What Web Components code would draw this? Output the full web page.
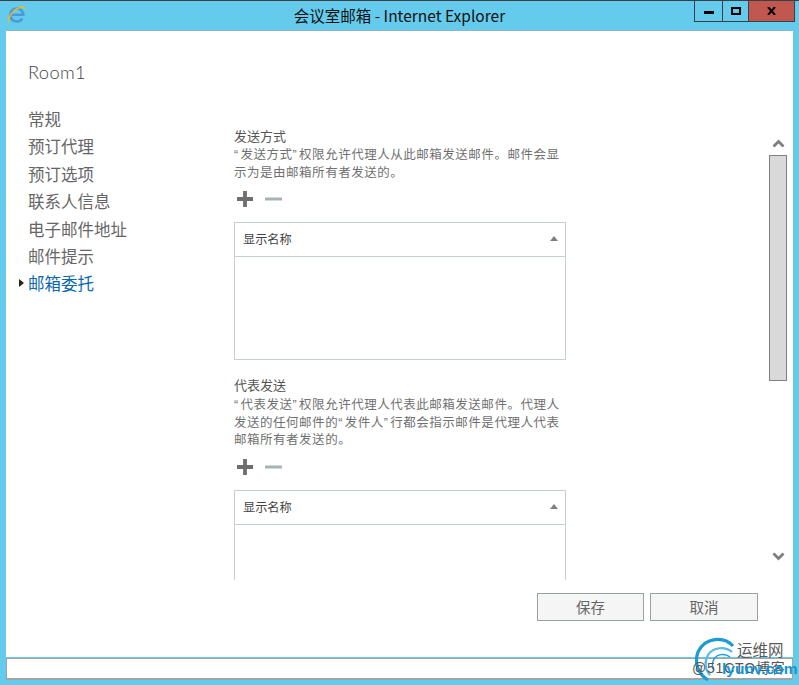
<!DOCTYPE html>
<html lang="zh"><head><meta charset="utf-8"><title>会议室邮箱</title>
<style>html,body{margin:0;padding:0;background:#65cbec}body{width:799px;height:685px;overflow:hidden;font-family:"Noto Sans CJK SC","Liberation Sans",sans-serif}</style></head>
<body>
<ie-window>
  <room-nav slot="nav"></room-nav>
  <delegate-section title-text="发送方式" lines="“发送方式”权限允许代理人从此邮箱发送邮件。邮件会显|示为是由邮箱所有者发送的。"></delegate-section>
  <delegate-section style="--dg:3px;--tg:7.5px" title-text="代表发送" lines="“代表发送”权限允许代理人代表此邮箱发送邮件。代理人|发送的任何邮件的“发件人”行都会指示邮件是代理人代表|邮箱所有者发送的。"></delegate-section>
</ie-window>
<script>
const F='"Noto Sans CJK SC","Liberation Sans",sans-serif';
customElements.define('ie-window',class extends HTMLElement{constructor(){super();this.attachShadow({mode:'open'}).innerHTML=`<style>
:host{display:flex;flex-direction:column;width:799px;height:685px;box-sizing:border-box;background:#65cbec;border-top:1px solid #3a3f44;position:relative;font-family:${F}}
.title{height:29px;flex:none;display:flex;align-items:flex-start;position:relative}
.logo{margin:5px 0 0 8px;flex:none}
.t{position:absolute;left:0;right:0;top:5px;text-align:center;font:15.5px/18px ${F};color:#111}
.ctrls{position:absolute;right:4px;top:0;display:flex;height:21px;border:1px solid #3c4046;border-top:0;box-sizing:border-box}
.ctrls div{display:flex;align-items:center;justify-content:center;box-sizing:border-box;height:20px}
.min{width:28px;border-right:1px solid #3c4046}.max{width:26px;border-right:1px solid #3c4046}.cl{width:45px;background:#c0584f}
.main{margin:0 6px;flex:none;height:627px;background:#fff;border-top:1px solid #8fb6c8;box-sizing:border-box;display:flex;flex-direction:column}
.h{font:300 18.300px/24px Lato,"Liberation Sans",sans-serif;color:#454545;padding:29px 0 0 22px;height:24px;flex:none;letter-spacing:.35px}
.body{display:flex;height:475px;margin-top:22px;flex:none;position:relative}
.navc{width:228px;flex:none}
.scroll{width:332px;height:452px;overflow:hidden;flex:none;margin-top:-1px;padding-top:23px}
.sb{position:absolute;left:763px;top:0;width:18px;height:475px}
.foot{display:flex;justify-content:flex-end;gap:6px;padding:12px 35px 0 0;flex:none}
.status{margin:0 6px;height:22px;flex:none;background:#fff;border:1px solid #a3a3a3;border-bottom-width:2px;box-sizing:border-box;margin-top:1px}
.wm{position:absolute;left:695px;top:636px;width:100px;height:44px;pointer-events:none}
.wm .a{position:absolute;left:42px;top:3px;font:15.5px/18px ${F};color:#5a5a5a}
.wm .b{position:absolute;left:-3px;top:22px;font:14px/18px "Liberation Sans",${F};color:#555;white-space:nowrap;letter-spacing:.8px}
.wm .c{position:absolute;left:27px;top:23px;font:bold 15.5px/18px "Liberation Sans",sans-serif;color:#0f96d8;white-space:nowrap}
</style>
<div class="title">
<svg class="logo" width="18" height="18" viewBox="0 0 18 18">
<path d="M14.300 12.500A6.500 6.500 0 1 1 15.300 8.800H3.500" fill="none" stroke="#4a9bd8" stroke-width="2.600"/>
<path d="M1 16.500C-1 13 4 5 10 2.300c3.800-1.700 7-1.500 7 .8" fill="none" stroke="#f2b52a" stroke-width="1.600"/></svg>
<div class="t">会议室邮箱 - Internet Explorer</div>
<div class="ctrls">
<div class="min"><svg width="10" height="10" viewBox="0 0 10 10"><rect y="5" width="10" height="3" fill="#000"/></svg></div>
<div class="max"><svg width="10" height="8" viewBox="0 0 10 8"><rect x="1" y="1" width="8" height="6" fill="none" stroke="#000" stroke-width="2"/></svg></div>
<div class="cl"><svg width="9" height="8" viewBox="0 0 9 8"><path d="M1 0l7 8M8 0L1 8" fill="none" stroke="#000" stroke-width="2"/></svg></div>
</div></div>
<div class="main">
<div class="h">Room1</div>
<div class="body"><div class="navc"><slot name="nav"></slot></div><div class="scroll"><slot></slot></div>
<div class="sb"><x-scrollbar></x-scrollbar></div></div>
<div class="foot"><flat-button>保存</flat-button><flat-button wide>取消</flat-button></div>
</div>
<div class="status"></div>
<div class="wm">
<svg width="50" height="46" viewBox="0 0 50 46" style="position:absolute;left:0;top:0"><path d="M38 9C29-1 10 0 3 15c-4 11 0 22 10 28" fill="none" stroke="#1c9ad6" stroke-width="3.200"/><path d="M37 15c-7-6-19-5-24 3-4 7-3 15 2 20" fill="none" stroke="#55bbe6" stroke-width="2.200"/><path d="M35 20c-5-4-13-3-16 2-2 4-2 8 0 11" fill="none" stroke="#1c9ad6" stroke-width="1.500"/></svg>
<div class="a">运维网</div><div class="b">@51CTO博客</div><div class="c">lyunv.com</div>
</div>`}});
customElements.define('room-nav',class extends HTMLElement{constructor(){super();const items=['常规','预订代理','预订选项','联系人信息','电子邮件地址','邮件提示','邮箱委托'];
this.attachShadow({mode:'open'}).innerHTML=`<style>
:host{display:flex;flex-direction:column;padding-left:22px;font:16.500px/27.400px ${F};color:#666}
div{height:27.400px;position:relative;white-space:nowrap}
.on{color:#0a67b0}
.on:before{content:"";position:absolute;left:-9.500px;top:9px;border-left:5px solid #222;border-top:4px solid transparent;border-bottom:4px solid transparent}
</style>`+items.map((t,i)=>`<div class="${i==6?'on':''}">${t}</div>`).join('')}});
customElements.define('delegate-section',class extends HTMLElement{connectedCallback(){if(this.shadowRoot)return;
const ls=this.getAttribute('lines').split('|').map(l=>`<div>${l.replace(/[“”]/g,m=>`<span class="q">${m}</span>`)}</div>`).join('');
this.attachShadow({mode:'open'}).innerHTML=`<style>
:host{display:block;width:332px;margin-bottom:17px;font-family:${F}}
.t{font:13px/15px ${F};color:#555}
.d{font:12.500px/17.500px ${F};color:#707070;white-space:nowrap;margin-top:var(--dg,2px);letter-spacing:.52px}
.d div{height:17.500px}
.q{display:inline-block;width:6.500px;font-family:"Liberation Sans",sans-serif;line-height:1;letter-spacing:0}
.tools{display:flex;gap:12px;margin:var(--tg,7px) 0 0 3px;height:24px;align-items:center}
.list{border:1px solid #c4ced3;box-sizing:border-box;width:332px;height:138px;margin-top:11px}
.hd{height:34px;border-bottom:1px solid #c4ced3;box-sizing:border-box;border-right:1px solid #c4ced3;display:flex;align-items:center;justify-content:space-between;padding:0 7px 2px 8px;font:12.200px/16px ${F};color:#444;width:331px}
.tri{width:0;height:0;border-left:4px solid transparent;border-right:4px solid transparent;border-bottom:5px solid #7b8082}
</style>
<div class="t">${this.getAttribute('title-text')}</div>
<div class="d">${ls}</div>
<div class="tools">
<svg width="16" height="16" viewBox="0 0 16 16"><path d="M0 8h16M8 0v16" stroke="#6e6e6e" stroke-width="3.800"/></svg>
<svg width="17" height="16" viewBox="0 0 17 16"><path d="M0 8h17" stroke="#a6b2b4" stroke-width="3"/></svg>
</div>
<div class="list"><div class="hd"><span>显示名称</span><span class="tri"></span></div></div>`}});
customElements.define('flat-button',class extends HTMLElement{constructor(){super();this.attachShadow({mode:'open'}).innerHTML=`<style>
:host{display:flex;align-items:center;justify-content:center;box-sizing:border-box;width:107px;height:28px;background:#f5f5f5;border:1px solid #98a2a6;font:14.500px/18px ${F};color:#666}
:host([wide]){width:108px}
</style><slot></slot>`}});
customElements.define('x-scrollbar',class extends HTMLElement{constructor(){super();this.attachShadow({mode:'open'}).innerHTML=`<style>
:host{display:flex;flex-direction:column;align-items:center;width:18px}
.thumb{width:18px;height:226px;background:#d9d9d9;border:1px solid #808080;box-sizing:border-box;margin-top:7px}
.up{margin-top:32px}.dn{margin-top:171px}
</style>
<svg class="up" width="13" height="10" viewBox="0 0 13 10"><path d="M1.500 8.500l5-5 5 5" fill="none" stroke="#7e7e7e" stroke-width="2.800"/></svg>
<div class="thumb"></div>
<svg class="dn" width="13" height="10" viewBox="0 0 13 10"><path d="M1.500 1.500l5 5 5-5" fill="none" stroke="#7e7e7e" stroke-width="2.800"/></svg>`}});
</script>
</body></html>
